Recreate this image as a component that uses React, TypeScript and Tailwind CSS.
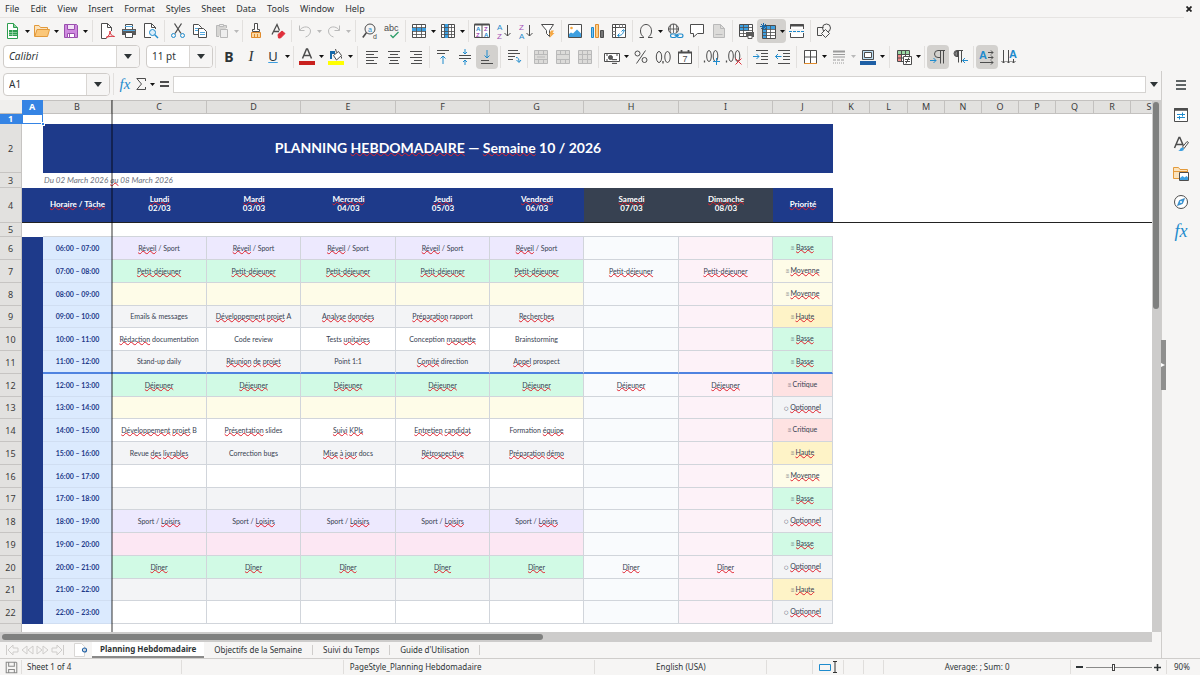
import React from "react";

type Kids = { children?: React.ReactNode };

const INK = "#4d4d4d";
const BLUE = "#1e8bcd";
const OFF = "#b9b9b9";

function Ic({ children, c = INK }: Kids & { c?: string }) {
  return (
    <svg width="16" height="16" viewBox="0 0 16 16" fill="none" stroke={c} className="shrink-0 overflow-visible" aria-hidden="true">
      {children}
    </svg>
  );
}

function Letter({ x, y, s, c, b, children }: Kids & { x: number; y: number; s: number; c: string; b?: boolean }) {
  return (
    <text x={x} y={y} fontSize={s} fill={c} stroke="none" fontWeight={b ? 700 : 400} fontFamily="Liberation Sans, sans-serif">
      {children}
    </text>
  );
}

function Lines({ rows, c = INK }: { rows: [number, number, number][]; c?: string }) {
  return (
    <g stroke={c}>
      {rows.map(([x, y, w], i) => (
        <path key={i} d={`M${x} ${y}h${w}`} />
      ))}
    </g>
  );
}

const icons: Record<string, React.ReactNode> = {
  new: (
    <Ic c="#2e9e4f">
      <path d="M2.500 .5h6l4 4v11h-10z" fill="#fff" />
      <path d="M8.500 .5v4h4" fill="#8fd3a0" />
      <path d="M4 7h8v6H4z" fill="#2e9e4f" stroke="none" />
      <path d="M4 9.500h8M4 11.500h8M7.500 7v6" stroke="#b9e5c4" strokeWidth=".6" />
    </Ic>
  ),
  open: (
    <Ic c="#e39a3b">
      <path d="M.5 13.500v-11h4.500l1.500 2h7v3" fill="#fbe3bd" />
      <path d="M3 6.500h12.500l-2 7H.8z" fill="#fbc779" />
    </Ic>
  ),
  save: (
    <Ic c="#9a4fae">
      <path d="M1.500 1.500h12l1 1v12h-13z" fill="#cf8adf" />
      <path d="M4.500 1.500h7v5h-7z" fill="#f3e2f7" />
      <path d="M4.500 14.500v-4h7v4z" fill="#fff" />
      <path d="M6.500 11v3" />
    </Ic>
  ),
  pdf: (
    <Ic>
      <path d="M12.500 8V4.500l-4-4h-6v15h5" fill="#fff" />
      <path d="M8.500 .5v4h4" />
      <path d="M7 14.500c3-1 4-4 4-6.500 0 3 2 5.500 4.500 5.500-3-.5-6 0-8.500 1z" stroke="#d9343f" />
    </Ic>
  ),
  print: (
    <Ic>
      <path d="M4.500 6V1.500h7V6" fill="#fff" />
      <path d="M1 6h14v6H1z" fill="#5a5a5a" stroke="none" />
      <path d="M2 7.500h12" stroke="#54a8de" />
      <path d="M4.500 9.500h7v5h-7z" fill="#fff" />
      <path d="M4 3.500h8" stroke="#54a8de" />
    </Ic>
  ),
  preview: (
    <Ic>
      <path d="M8 14.500H1.500V.5h7l4 4V6" fill="#fff" />
      <path d="M8.500 .5v4h4" />
      <circle cx="9.500" cy="9.500" r="3" stroke={BLUE} fill="#dceefa" />
      <path d="M11.800 11.800l3.200 3.200" stroke={BLUE} strokeWidth="1.400" />
    </Ic>
  ),
  cut: (
    <Ic>
      <path d="M4.500 .5L11 10.500M11.500 .5L5 10.500" strokeWidth="1.300" />
      <circle cx="3.500" cy="12.500" r="2" stroke={BLUE} />
      <circle cx="12.500" cy="12.500" r="2" stroke={BLUE} />
    </Ic>
  ),
  copy: (
    <Ic>
      <path d="M1.500 1.500h5l3 3v7h-8z" fill="#fff" />
      <path d="M3 5.500h4M3 7.500h4" stroke="#54a8de" />
      <path d="M6.500 5.500h5l3 3v6h-8z" fill="#fff" />
      <path d="M8 9.500h5M8 11.500h5" stroke="#54a8de" />
    </Ic>
  ),
  paste: (
    <Ic c={OFF}>
      <path d="M5 13.500H2.500v-11h10V5" fill="#d6d5d3" />
      <path d="M5.500 1.500h4v2h-4z" fill="#eee" />
      <path d="M6.500 6.500h7v8h-7z" fill="#eee" />
    </Ic>
  ),
  brush: (
    <Ic>
      <path d="M6.500 6.500v-6h3v6h2v2h-7v-2z" fill="#fff" />
      <path d="M3.500 9.500h9v5h-9z" fill="#fcd9a3" stroke="#e08b2d" />
      <path d="M6.500 11v3M9.500 11v3" stroke="#e08b2d" />
    </Ic>
  ),
  clear: (
    <Ic>
      <path d="M2 11.500L7 1.500l2.500 6M4 8.500h5" strokeWidth="1.300" />
      <path d="M8 11.500l4-3.500 3 2.500-4.500 4.500h-2z" fill="#e0303c" stroke="#e0303c" />
    </Ic>
  ),
  undo: (
    <Ic c={OFF}>
      <path d="M2.500 2.500v5h5M2.800 7C6 2.500 13.500 3 13.500 8c0 3-2 5-5 6" />
    </Ic>
  ),
  redo: (
    <Ic c={OFF}>
      <path d="M13.500 2.500v5h-5M13.200 7C10 2.500 2.500 3 2.500 8c0 3 2 5 5 6" />
    </Ic>
  ),
  find: (
    <Ic>
      <circle cx="8" cy="6" r="5" />
      <path d="M4.500 9.500L.8 14.500" strokeWidth="1.600" />
      <Letter x={6} y={8.5} s={7} c={BLUE}>a</Letter>
      <Letter x={11} y={15.5} s={7} c={INK}>d</Letter>
    </Ic>
  ),
  spell: (
    <Ic>
      <Letter x={0} y={8} s={9} c={INK}>abc</Letter>
      <path d="M6.500 12l2.500 2.500L14.500 9" stroke="#2e9e6a" strokeWidth="1.300" />
    </Ic>
  ),
  row: (
    <Ic>
      <path d="M1.500 1.500h13v13h-13z" fill="#fff" />
      <path d="M1 5h14v3H1z" fill="#3d9fe0" stroke="none" />
      <path d="M1 4.500h14M1 8.500h14M1 11.500h14M5.500 1v14M10.500 1v14" strokeWidth=".8" />
    </Ic>
  ),
  col: (
    <Ic>
      <path d="M1.500 1.500h13v13h-13z" fill="#fff" />
      <path d="M4 1h4v14H4z" fill="#3d9fe0" stroke="none" />
      <path d="M1 4.500h14M1 8.500h14M1 11.500h14M4.500 1v14M8.500 1v14M11.500 1v14" strokeWidth=".8" />
    </Ic>
  ),
  sort: (
    <Ic>
      <path d="M.5 1.500h15v13H.5z" fill="#fff" />
      <path d="M.5 1.500h15" strokeWidth="2" />
      <path d="M8 1v14" />
      <Letter x={2} y={8} s={6} c={BLUE} b>A</Letter>
      <Letter x={2} y={14} s={6} c="#a34fb5" b>Z</Letter>
      <Letter x={10} y={8} s={6} c="#a34fb5" b>Z</Letter>
      <Letter x={10} y={14} s={6} c={BLUE} b>A</Letter>
    </Ic>
  ),
  asc: (
    <Ic>
      <Letter x={1} y={7} s={8} c={BLUE}>A</Letter>
      <Letter x={1} y={16} s={8} c="#a34fb5">Z</Letter>
      <path d="M11.500 2v11M8.500 10l3 3 3-3" />
    </Ic>
  ),
  desc: (
    <Ic>
      <Letter x={1} y={7} s={8} c="#a34fb5">Z</Letter>
      <Letter x={1} y={16} s={8} c={BLUE}>A</Letter>
      <path d="M11.500 2v11M8.500 10l3 3 3-3" />
    </Ic>
  ),
  filter: (
    <Ic>
      <path d="M1.500 1.500h12l-4 6v6l-3-3v-3z" fill="#fff" />
      <path d="M11 7.500h3l-1.500 2.500h2L9.500 15l1-3.500H9z" fill="#f5a742" stroke="none" />
    </Ic>
  ),
  image: (
    <Ic>
      <path d="M1.500 1.500h13v13h-13z" fill="#fff" />
      <circle cx="4.500" cy="5" r="1.300" fill="#f5a742" stroke="none" />
      <path d="M2 14v-3l2-1.500 2 1 4-4 4 4V14z" fill="#3d9fe0" stroke="none" />
    </Ic>
  ),
  chart: (
    <Ic>
      <path d="M2.500 4.500h2v10h-2z" fill="#7cc0ee" stroke={BLUE} />
      <path d="M6.500 1.500h3v13h-3z" fill="#fbd08b" stroke="#e08b2d" />
      <path d="M11.500 7.500h3v7h-3z" fill="#777" />
    </Ic>
  ),
  pivot: (
    <Ic>
      <path d="M1.500 1.500h13v13h-13zM1 4.500h14M4.500 1v14" fill="#fff" />
      <path d="M8.500 1.500v3M11.500 1.500v3M1.500 8.500h3M1.500 11.500h3" stroke="#888" />
      <path d="M7 12.500c4 0 5.500-2 5.500-5M6.500 12.500l2-2M6.500 12.500l2 1.500M12.500 6.500l-2 2M12.500 6.500l1.500 2" stroke={BLUE} />
    </Ic>
  ),
  omega: (
    <Ic>
      <path d="M1.500 14.500H6c-2-1.500-3.500-3.500-3.500-6.500C2.500 4 5 1.500 8 1.500S13.500 4 13.500 8c0 3-1.500 5-3.500 6.500h4.500" />
    </Ic>
  ),
  link: (
    <Ic>
      <circle cx="6.500" cy="6" r="5" />
      <path d="M1.500 6h10M6.500 1v9M4 1.800c-1.200 3-1.200 6 0 8.500M9 1.800c1.200 3 1.200 6 0 8" strokeWidth=".8" />
      <path d="M4 10.500h12v5H4z" fill="#f6f5f4" stroke="none" />
      <rect x="3.500" y="11" width="6" height="3.500" rx="1.700" stroke={BLUE} strokeWidth="1.200" />
      <rect x="10" y="11" width="6" height="3.500" rx="1.700" stroke={BLUE} strokeWidth="1.200" />
      <path d="M7.500 12.700h4.500" stroke={BLUE} />
    </Ic>
  ),
  comment: (
    <Ic>
      <path d="M1.500 1.500h13v9H8.500L4.500 14v-3.500h-3z" fill="#fff" />
    </Ic>
  ),
  headfoot: (
    <Ic c={OFF}>
      <path d="M2.500 1.500h7l4 4v9h-11z" fill="#dcdbd9" />
      <path d="M9.500 1.500v4h4M4.500 11.500h7" />
    </Ic>
  ),
  printarea: (
    <Ic>
      <path d="M1.500 1.500h13v12h-13z" fill="#fff" />
      <path d="M2 2h9v6H2z" fill="#3d9fe0" stroke="none" />
      <path d="M1 4.500h14M1 7.500h14M1 10.500h14M5.500 1v13M10.500 1v7" strokeWidth=".8" />
      <path d="M8 9h8v5H8z" fill="#5a5a5a" stroke="none" />
      <path d="M10 12.500h4v3h-4z" fill="#fff" stroke="#5a5a5a" />
    </Ic>
  ),
  freeze: (
    <Ic>
      <path d="M2.500 2.500h13v13h-13z" fill="#fff" />
      <path d="M3 3h12v3H3zM3 6h4v9H3z" fill="#3d9fe0" stroke="none" />
      <path d="M2 6.500h13M2 9.500h13M2 12.500h13M6.500 2v13M10.500 2v13" strokeWidth=".8" />
      <path d="M3.500 0v7M0 3.500h7M1 1l5 5M6 1L1 6" stroke="#1769aa" />
    </Ic>
  ),
  split: (
    <Ic>
      <path d="M1.500 6V1.500h13V6M1.500 10v4.500h13V10" fill="#fff" />
      <path d="M1 2.500h14" strokeWidth="2" />
      <path d="M0 8.500h16" stroke={BLUE} strokeDasharray="3 1" />
    </Ic>
  ),
  shapes: (
    <Ic>
      <circle cx="10.500" cy="5" r="4" />
      <path d="M6 12.500H1.500v-8h6" />
      <path d="M9.500 6.500l4 4-4 4-4-4z" fill="#f6f5f4" />
    </Ic>
  ),
  left: <Ic><Lines rows={[[2, 2.5, 12], [2, 5.5, 8], [2, 8.5, 12], [2, 11.5, 8], [2, 14.5, 11]]} /></Ic>,
  center: <Ic><Lines rows={[[2, 2.5, 12], [4, 5.5, 8], [2, 8.5, 12], [4, 11.5, 8], [3, 14.5, 10]]} /></Ic>,
  right: <Ic><Lines rows={[[2, 2.5, 12], [6, 5.5, 8], [2, 8.5, 12], [6, 11.5, 8], [3, 14.5, 11]]} /></Ic>,
  top: (
    <Ic>
      <Lines rows={[[2, 1.5, 12], [2, 4.5, 8]]} />
      <path d="M8 15V7M5.500 9.500L8 7l2.500 2.500" stroke={BLUE} />
    </Ic>
  ),
  middle: (
    <Ic>
      <Lines rows={[[2, 6.5, 12], [2, 9.5, 12]]} />
      <path d="M8 0v5M6 3l2 2 2-2M8 16v-5M6 13l2-2 2 2" stroke={BLUE} />
    </Ic>
  ),
  bottom: (
    <Ic>
      <Lines rows={[[2, 11.5, 8], [2, 14.5, 12]]} />
      <path d="M8 1v8M5.500 6.500L8 9l2.500-2.500" stroke={BLUE} />
    </Ic>
  ),
  wrap: (
    <Ic>
      <Lines rows={[[2, 1.5, 10], [2, 4.5, 12], [2, 7.5, 7], [2, 10.5, 5]]} />
      <path d="M10 8.500c2.500 0 3 1.500 3 4.500M10.500 11l2.500 2.500 2-2.500" stroke={BLUE} />
    </Ic>
  ),
  merge1: (
    <Ic c={OFF}>
      <path d="M1.500 1.500h13v13h-13z" fill="#dcdbd9" />
      <path d="M1 5.500h14M1 10.500h14M5.500 1v4M10.500 1v4M5.500 11v4M10.500 11v4M4 8h8" />
    </Ic>
  ),
  merge2: (
    <Ic c={OFF}>
      <path d="M1.500 1.500h13v13h-13z" fill="#dcdbd9" />
      <path d="M1 5.500h14M1 10.500h14M5.500 1v4M10.500 1v4M5.500 11v4M10.500 11v4" />
    </Ic>
  ),
  merge3: (
    <Ic c={OFF}>
      <path d="M1.500 1.500h13v13h-13z" fill="#dcdbd9" />
      <path d="M1 5.500h14M1 10.500h14M5.500 1v14M10.500 1v14" />
    </Ic>
  ),
  currency: (
    <Ic>
      <path d="M.5 4.500h15v8H.5z" fill="#fff" />
      <path d="M2 6h2M12 6h2M2 11h2" />
      <circle cx="6.500" cy="8.500" r="2" fill="#5a5a5a" />
      <path d="M8 10h5v5H8z" fill="#5a5a5a" stroke="none" />
      <path d="M8 11.500h5M8 13.500h5" stroke="#ddd" />
    </Ic>
  ),
  percent: (
    <Ic>
      <circle cx="4.500" cy="4.500" r="2.500" />
      <circle cx="11.500" cy="11" r="2.500" />
      <path d="M12.500 1.500L3.500 14.500" />
    </Ic>
  ),
  number: (
    <Ic>
      <ellipse cx="4" cy="8" rx="2.700" ry="5.500" />
      <ellipse cx="12.500" cy="8" rx="2.700" ry="5.500" />
      <path d="M8 12v2.500" strokeWidth="1.300" />
    </Ic>
  ),
  date: (
    <Ic>
      <path d="M1.500 3.500h13v11h-13z" fill="#fff" />
      <path d="M1 3.500h14M4.500 1v3M11.500 1v3" strokeWidth="1.800" />
      <Letter x={5.5} y={13} s={9} c={INK}>7</Letter>
    </Ic>
  ),
  adddec: (
    <Ic>
      <ellipse cx="5" cy="7" rx="2.300" ry="5.500" />
      <ellipse cx="11.500" cy="7" rx="2.300" ry="5.500" />
      <path d="M.5 11.500v2" strokeWidth="1.300" />
      <path d="M12.500 9v7M9 12.500h7" stroke={BLUE} />
    </Ic>
  ),
  deldec: (
    <Ic>
      <ellipse cx="5" cy="7" rx="2.300" ry="5.500" />
      <ellipse cx="11.500" cy="7" rx="2.300" ry="5.500" />
      <path d="M.5 11.500v2" strokeWidth="1.300" />
      <path d="M9.500 9.500l6 6M15.500 9.500l-6 6" stroke="#e0303c" />
    </Ic>
  ),
  indent: (
    <Ic>
      <Lines rows={[[3, 1.5, 12], [8, 4.5, 7], [8, 7.5, 7], [8, 10.5, 7], [3, 14.5, 12]]} />
      <path d="M0 7.500h6M3.500 5L6 7.500 3.500 10" stroke={BLUE} />
    </Ic>
  ),
  outdent: (
    <Ic>
      <Lines rows={[[3, 1.5, 12], [8, 4.5, 7], [8, 7.5, 7], [8, 10.5, 7], [3, 14.5, 12]]} />
      <path d="M.5 7.500h6M3 5L.5 7.500 3 10" stroke={BLUE} />
    </Ic>
  ),
  borders: (
    <Ic>
      <path d="M2.500 1.500h12v13h-12zM8.500 1v13M2 8h12" fill="#fff" />
      <path d="M2 14.500h13" stroke="#e08b2d" />
    </Ic>
  ),
  linestyle: (
    <Ic c="#9a9a9a">
      <path d="M2 2.500h12" strokeWidth="2" />
      <path d="M2 5.500h12M2 8h12" />
      <path d="M2 11h12" strokeDasharray="3 1" />
      <path d="M2 14h12" strokeDasharray="1 1" />
    </Ic>
  ),
  linecolor: (
    <Ic>
      <path d="M2.500 1.500h11v9h-11z" fill="#bfe0f5" />
      <path d="M4.500 3.500h7v5h-7z" fill="#fff" />
      <path d="M0 12h16v4H0z" fill="#1e5fa5" stroke="none" />
    </Ic>
  ),
  cond: (
    <Ic>
      <path d="M1.500 1.500h12v11h-12z" fill="#fff" />
      <path d="M2 2h11v3H2z" fill="#9bd7a5" stroke="none" />
      <path d="M2 6h4v6H2z" fill="#f08a8a" stroke="none" />
      <path d="M1 5.500h13M1 9h6M5.500 1v12M9.500 1v6" />
      <path d="M7.500 7.500h8v8h-8z" fill="#fff" />
      <path d="M9 10.500h5M9 12.500h5M13 8.500l-3 6" />
    </Ic>
  ),
  ltr: (
    <Ic>
      <path d="M13.500 1.500v13M10.500 1.500v13M15 1.500H8a3.500 3.500 0 000 7h2.500" />
      <path d="M0 11.500h6M3.500 9L6 11.500 3.500 14" stroke={BLUE} />
    </Ic>
  ),
  rtl: (
    <Ic>
      <path d="M9.500 1.500v12M6.500 1.500v12M11 1.500H5a3 3 0 000 6h1.500" />
      <path d="M5.500 2a2.700 2.700 0 000 5.500z" fill="#888" />
      <path d="M16 11.500h-5.500M13 9l-2.500 2.500L13 14" stroke={BLUE} />
    </Ic>
  ),
  horiz: (
    <Ic>
      <Letter x={0} y={10} s={11} c={BLUE} b>A</Letter>
      <path d="M9 3.500h5M12 1.500l2 2-2 2M9 8.500h5M12 6.500l2 2-2 2M1 13.500h13M12 11.500l2 2-2 2" />
    </Ic>
  ),
  vert: (
    <Ic>
      <Letter x={8} y={9} s={11} c={BLUE} b>A</Letter>
      <path d="M2.500 1v13M.5 12l2 2 2-2M7.500 1v13M5.500 12l2 2 2-2M12.500 10v4M10.500 12l2 2 2-2" />
    </Ic>
  ),
  fontcolor: (
    <Ic>
      <path d="M3.500 9.500L7.500 0h1l4 9.500M5 6.500h6" strokeWidth="1.500" />
      <path d="M0 12h16v4H0z" fill="#c9211e" stroke="none" />
    </Ic>
  ),
  highlight: (
    <Ic>
      <path d="M5.500 6.500l5-4 3 4-5 4.500z" fill="#fff" />
      <path d="M8.500 3.500L7.500 0M13.500 7.500v2" />
      <path d="M2 2h5v3H4v5H2z" fill="#1769aa" stroke="none" />
      <path d="M0 12h16v4H0z" fill="#ffff00" stroke="none" />
    </Ic>
  ),
};

function Btn({ name, label, on }: { name: string; label: string; on?: boolean }) {
  return (
    <button
      type="button"
      aria-label={label}
      aria-pressed={on}
      className={`flex h-6 w-[22px] shrink-0 items-center justify-center rounded ${on ? "bg-[#d3d1ce]" : ""}`}
    >
      {icons[name]}
    </button>
  );
}

function Caret({ off, big }: { off?: boolean; big?: boolean }) {
  return big ? (
    <svg width="8" height="5" viewBox="0 0 8 5" aria-hidden="true">
      <path d="M0 0h8L4 5z" fill="#2e3436" />
    </svg>
  ) : (
    <svg width="5" height="3" viewBox="0 0 5 3" aria-hidden="true">
      <path d="M0 0h5L2.500 3z" fill={off ? "#b9b9b9" : "#111"} />
    </svg>
  );
}

function Arrow({ label, off }: { label: string; off?: boolean }) {
  return (
    <button type="button" aria-label={label} disabled={off} className="flex h-6 w-[7px] shrink-0 items-center justify-center">
      <Caret off={off} />
    </button>
  );
}

function Drop({ name, label, off, offArrow }: { name: string; label: string; off?: boolean; offArrow?: boolean }) {
  return (
    <div className="flex">
      <Btn name={name} label={label} />
      <Arrow label={`${label} options`} off={off || offArrow} />
    </div>
  );
}

function Sep({ wide }: { wide?: boolean }) {
  return (
    <div className={`flex h-[22px] shrink-0 justify-center ${wide ? "w-[7px]" : "w-[5px]"}`}>
      <div className="w-px bg-[#e2e0de]" />
    </div>
  );
}

function Combo({ label, value, box, italic, arrow }: { label: string; value: string; box: string; italic?: boolean; arrow: string }) {
  return (
    <div className={`relative h-[23px] shrink-0 ${box}`}>
      <select
        aria-label={label}
        className={`h-full w-full appearance-none rounded border border-[#cfccc9] bg-white pl-[5px] text-[10px] text-[#2e3436] ${italic ? "italic" : ""}`}
      >
        <option>{value}</option>
      </select>
      <span
        className={`pointer-events-none absolute inset-y-px right-px flex items-center justify-center rounded-r-[3px] border-l border-[#d9d6d3] bg-[#f6f5f4] ${arrow}`}
      >
        <Caret big />
      </span>
    </div>
  );
}

const menus = ["File", "Edit", "View", "Insert", "Format", "Styles", "Sheet", "Data", "Tools", "Window", "Help"];

function MenuBar() {
  return (
    <header className="flex h-[17px] items-center justify-between pr-1">
      <nav className="flex items-center gap-[11px] pl-[5px] text-[9px]">
        {menus.map((m) => (
          <button key={m} type="button" className="leading-4">
            {m}
          </button>
        ))}
      </nav>
      <button type="button" aria-label="Close document" className="p-1">
        <svg width="6" height="6" viewBox="0 0 6 6" stroke="#222" strokeWidth="1.800" aria-hidden="true">
          <path d="M.5 .5l5 5M5.500 .5l-5 5" />
        </svg>
      </button>
    </header>
  );
}

function StandardBar() {
  return (
    <div className="mr-4 flex h-[27px] items-center border-t border-[#e6e4e2] pl-[2px]">
      <Drop name="new" label="New" />
      <Drop name="open" label="Open" />
      <Drop name="save" label="Save" />
      <Sep wide />
      <Btn name="pdf" label="Export as PDF" />
      <Btn name="print" label="Print" />
      <Btn name="preview" label="Print preview" />
      <Sep />
      <Btn name="cut" label="Cut" />
      <Btn name="copy" label="Copy" />
      <Drop name="paste" label="Paste" off />
      <Sep />
      <Btn name="brush" label="Clone formatting" />
      <Btn name="clear" label="Clear formatting" />
      <Sep />
      <Drop name="undo" label="Undo" off />
      <Drop name="redo" label="Redo" off />
      <Sep wide />
      <Btn name="find" label="Find and replace" />
      <Btn name="spell" label="Spelling" />
      <Sep />
      <Drop name="row" label="Row" />
      <Drop name="col" label="Column" />
      <Sep />
      <Btn name="sort" label="Sort" />
      <Btn name="asc" label="Sort ascending" />
      <Btn name="desc" label="Sort descending" />
      <Btn name="filter" label="AutoFilter" />
      <Sep />
      <Btn name="image" label="Insert image" />
      <Btn name="chart" label="Insert chart" />
      <Btn name="pivot" label="Pivot table" />
      <Sep />
      <Drop name="omega" label="Special character" />
      <Btn name="link" label="Hyperlink" />
      <Btn name="comment" label="Comment" />
      <Btn name="headfoot" label="Headers and footers" />
      <Sep />
      <Btn name="printarea" label="Define print area" />
      <div className="flex rounded bg-[#d3d1ce]">
        <Btn name="freeze" label="Freeze rows and columns" />
        <Arrow label="Freeze options" />
      </div>
      <Btn name="split" label="Split window" />
      <Sep />
      <Btn name="shapes" label="Show draw functions" />
    </div>
  );
}

function FormatBar() {
  return (
    <div className="flex h-[27px] items-center pb-[2px] pl-[3px]">
      <Combo label="Font name" value="Calibri" box="w-[137px]" arrow="w-[23px]" italic />
      <div className="w-[6px] shrink-0" />
      <Combo label="Font size" value="11 pt" box="w-[67px]" arrow="w-[23px]" />
      <Sep />
      <button type="button" aria-label="Bold" className="h-6 w-[22px] shrink-0 text-[14px] font-bold">
        B
      </button>
      <button type="button" aria-label="Italic" className="h-6 w-[22px] shrink-0 font-['Liberation_Serif',serif] text-[15px] italic">
        I
      </button>
      <button type="button" aria-label="Underline" className="h-6 w-[22px] shrink-0 text-[13px] underline decoration-[#3d9fe0]">
        U
      </button>
      <Arrow label="Underline options" />
      <Sep />
      <Drop name="fontcolor" label="Font color" />
      <Drop name="highlight" label="Highlighting color" />
      <Sep wide />
      <Btn name="left" label="Align left" />
      <Btn name="center" label="Align center" />
      <Btn name="right" label="Align right" />
      <Sep />
      <Btn name="top" label="Align top" />
      <Btn name="middle" label="Center vertically" />
      <Btn name="bottom" label="Align bottom" on />
      <Sep />
      <Btn name="wrap" label="Wrap text" />
      <Sep />
      <Btn name="merge1" label="Merge and center" />
      <Btn name="merge2" label="Merge cells" />
      <Btn name="merge3" label="Unmerge cells" />
      <Sep />
      <Drop name="currency" label="Currency" />
      <Btn name="percent" label="Percent" />
      <Btn name="number" label="Number" />
      <Btn name="date" label="Date" />
      <Sep />
      <Btn name="adddec" label="Add decimal place" />
      <Btn name="deldec" label="Delete decimal place" />
      <Sep />
      <Btn name="indent" label="Increase indent" />
      <Btn name="outdent" label="Decrease indent" />
      <Sep />
      <Drop name="borders" label="Borders" />
      <Drop name="linestyle" label="Border style" offArrow />
      <Drop name="linecolor" label="Border color" />
      <Sep wide />
      <Drop name="cond" label="Conditional formatting" />
      <Sep />
      <Btn name="ltr" label="Left to right" on />
      <Btn name="rtl" label="Right to left" />
      <Sep />
      <Btn name="horiz" label="Text direction left to right" on />
      <Btn name="vert" label="Text direction top to bottom" />
    </div>
  );
}

function FormulaBar() {
  return (
    <div className="flex h-[29px] items-center pb-[3px] pl-[3px]">
      <Combo label="Name box" value="A1" box="w-[107px]" arrow="w-[23px]" />
      <Sep wide />
      <button type="button" aria-label="Function wizard" className="w-4 shrink-0 font-['Liberation_Serif',serif] text-[15px] leading-5 text-[#1e8bcd] italic">
        fx
      </button>
      <button type="button" aria-label="Sum" className="flex w-4 shrink-0 justify-center">
        <svg width="10" height="12" viewBox="0 0 10 12" fill="none" stroke={INK} aria-hidden="true">
          <path d="M9.500 3V.5H.8L5.500 6 .8 11.500h8.700V9" />
        </svg>
      </button>
      <Arrow label="Sum options" />
      <button type="button" aria-label="Formula" className="flex w-[17px] shrink-0 justify-center">
        <svg width="9" height="6" viewBox="0 0 9 6" fill={INK} aria-hidden="true">
          <path d="M0 0h9v2H0zM0 4h9v2H0z" />
        </svg>
      </button>
      <input aria-label="Input line" className="h-[17px] min-w-0 flex-1 border border-[#d5d3d1] bg-white px-1 outline-none" />
      <button type="button" aria-label="Expand formula bar" className="flex w-[15px] shrink-0 justify-center">
        <Caret big />
      </button>
    </div>
  );
}

/* Words between tildes are flagged by the spell checker. */
function Spelled({ text }: { text: string }) {
  return (
    <>
      {text.split("~").map((part, i) =>
        i % 2 ? (
          <span key={i} className="underline decoration-[#e0202c] decoration-wavy decoration-1 underline-offset-[-1px] [text-decoration-skip-ink:none]">
            {part}
          </span>
        ) : (
          part
        ),
      )}
    </>
  );
}

const fill = {
  violet: "bg-[#ede9fe]",
  green: "bg-[#d1fae5]",
  yellow: "bg-[#fefce8]",
  grey: "bg-[#f3f4f6]",
  white: "bg-white",
  pink: "bg-[#fce7f3]",
};

type Level = "Basse" | "Moyenne" | "Haute" | "Critique" | "Optionnel";

const levelFill: Record<Level, string> = {
  Basse: "bg-[#d1fae5]",
  Moyenne: "bg-[#fefce8]",
  Haute: "bg-[#fef3c7]",
  Critique: "bg-[#fee2e2]",
  Optionnel: "bg-[#f3f4f6]",
};

type Slot = { from: number; tone: keyof typeof fill; week?: string[]; all?: string; weekend?: string; level: Level };

const slots: Slot[] = [
  { from: 6, tone: "violet", all: "~Réveil~ / Sport", level: "Basse" },
  { from: 7, tone: "green", all: "~Petit-déjeuner~", weekend: "~Petit-déjeuner~", level: "Moyenne" },
  { from: 8, tone: "yellow", level: "Moyenne" },
  { from: 9, tone: "grey", week: ["Emails & messages", "~Développement~ ~projet~ A", "~Analyse~ ~données~", "~Préparation~ rapport", "~Recherches~"], level: "Haute" },
  { from: 10, tone: "white", week: ["~Rédaction~ documentation", "Code review", "Tests ~unitaires~", "Conception ~maquette~", "Brainstorming"], level: "Basse" },
  { from: 11, tone: "grey", week: ["Stand-up daily", "~Réunion~ ~de~ ~projet~", "Point 1:1", "~Comité~ direction", "~Appel~ prospect"], level: "Basse" },
  { from: 12, tone: "green", all: "~Déjeuner~", weekend: "~Déjeuner~", level: "Critique" },
  { from: 13, tone: "yellow", level: "Optionnel" },
  { from: 14, tone: "white", week: ["~Développement~ ~projet~ B", "~Présentation~ slides", "~Suivi~ ~KPIs~", "~Entretien~ ~candidat~", "Formation ~équipe~"], level: "Critique" },
  { from: 15, tone: "grey", week: ["Revue ~des~ ~livrables~", "Correction bugs", "~Mise~ ~à~ ~jour~ docs", "~Rétrospective~", "~Préparation~ ~démo~"], level: "Haute" },
  { from: 16, tone: "white", level: "Moyenne" },
  { from: 17, tone: "grey", level: "Basse" },
  { from: 18, tone: "violet", all: "Sport / ~Loisirs~", level: "Optionnel" },
  { from: 19, tone: "pink", level: "Basse" },
  { from: 20, tone: "green", all: "~Dîner~", weekend: "~Dîner~", level: "Optionnel" },
  { from: 21, tone: "grey", level: "Haute" },
  { from: 22, tone: "white", level: "Optionnel" },
];

const columns: [string, string][] = [
  ["A", "w-[21px]"],
  ["B", "w-[69px]"],
  ["C", "w-[95px]"],
  ["D", "w-[94px]"],
  ["E", "w-[95px]"],
  ["F", "w-[94px]"],
  ["G", "w-[94px]"],
  ["H", "w-[95px]"],
  ["I", "w-[94px]"],
  ["J", "w-[60px]"],
  ["K", "w-[37px]"],
  ["L", "w-[38px]"],
  ["M", "w-[37px]"],
  ["N", "w-[37px]"],
  ["O", "w-[37px]"],
  ["P", "w-[37px]"],
  ["Q", "w-[38px]"],
  ["R", "w-[37px]"],
  ["S", "w-[37px]"],
];

const days = ["Lundi", "Mardi", "Mercredi", "Jeudi", "Vendredi", "Samedi", "Dimanche"];

function RowHead({ n, on }: { n: number; on?: boolean }) {
  return (
    <th
      scope="row"
      className={`overflow-hidden border-r border-b text-center align-middle text-[9px] leading-none ${
        on ? "border-[#3584e4] bg-[#3584e4] font-bold text-white" : "border-[#c6c4c2] bg-[#e2e1df] font-normal text-[#3b3b3b]"
      }`}
    >
      {n}
    </th>
  );
}

const two = (n: number) => String(n).padStart(2, "0");

function Sheet() {
  return (
    <div className="relative min-w-0 flex-1 overflow-hidden bg-white">
      <table className="w-[1168px] table-fixed border-separate border-spacing-0 font-['Lato',sans-serif]">
        <colgroup>
          <col className="w-[22px]" />
          {columns.map(([c, w]) => (
            <col key={c} className={w} />
          ))}
        </colgroup>
        <thead className="font-['Noto_Sans',sans-serif]">
          <tr className="h-[14px]">
            <td className="border-b border-[#bdbbb9] bg-[#f0efed]" />
            {columns.map(([c]) => (
              <th
                key={c}
                scope="col"
                className={`border-y border-r text-center text-[9px] leading-3 ${
                  c === "A" ? "border-[#3584e4] bg-[#3584e4] font-bold text-white" : "border-[#c3c1bf] bg-[#e2e1df] font-normal text-[#3b3b3b]"
                }`}
              >
                {c}
              </th>
            ))}
          </tr>
        </thead>
        <tbody className="[&_th]:font-['Noto_Sans',sans-serif]">
          <tr className="h-[10px]">
            <RowHead n={1} on />
            <td className="relative">
              <div className="absolute inset-0 border border-[#3584e4]" />
              <div className="absolute -right-[2px] -bottom-[2px] z-10 size-1 border border-white bg-[#3584e4]" />
            </td>
            <td colSpan={18} />
          </tr>
          <tr className="h-[49px]">
            <RowHead n={2} />
            <td />
            <td colSpan={9} className="bg-[#1e3a8a] pb-[3px] text-center text-[14px] font-bold text-white">
              PLANNING <Spelled text="~HEBDOMADAIRE~" /> — <Spelled text="~Semaine~" /> 10 / 2026
            </td>
            <td colSpan={9} />
          </tr>
          <tr className="h-[15px]">
            <RowHead n={3} />
            <td />
            <td colSpan={9} className="pb-[2px] pl-px text-[8px] leading-3 text-[#6b7280] italic">
              <Spelled text="Du 02 March 2026 ~au~ 08 March 2026" />
            </td>
            <td colSpan={9} />
          </tr>
          <tr className="h-[35px] text-center text-[8px] leading-[9px] font-bold text-white [&_td]:border-b [&_td]:border-[#222] [&_td]:pb-[2px]">
            <RowHead n={4} />
            <td className="bg-[#1e3a8a]" />
            <td className="bg-[#1e3a8a]">
              <Spelled text="~Horaire~ / ~Tâche~" />
            </td>
            {days.map((d, i) => (
              <td key={d} className={i > 4 ? "bg-[#374151]" : "bg-[#1e3a8a]"}>
                <Spelled text={`~${d}~`} />
                <br />
                {two(i + 2)}/03
              </td>
            ))}
            <td className="bg-[#1e3a8a]">
              <Spelled text="~Priorité~" />
            </td>
            <td colSpan={9} />
          </tr>
          <tr className="h-[14px]">
            <RowHead n={5} />
            <td />
            <td colSpan={9} className="border-b border-[#d1d5db]" />
            <td colSpan={9} />
          </tr>
          {slots.map((s, i) => {
            const noon = s.from === 11;
            const edge = noon ? "border-r border-b-2 border-r-[#d1d5db] border-b-[#4f83e0]" : "border-r border-b border-[#d1d5db]";
            return (
              <tr key={s.from} className={`text-center text-[7px] leading-[9px] text-[#374151] ${i % 4 === 3 ? "h-[22px]" : "h-[23px]"}`}>
                <RowHead n={i + 6} />
                <td className="bg-[#1e3a8a]" />
                <td className={`bg-[#dbeafe] font-bold text-[#1e3a8a] ${noon ? "border-b-2 border-[#4f83e0]" : "border-b border-[#d0def2]"}`}>
                  {two(s.from)}:00 – {two(s.from + 1)}:00
                </td>
                {[0, 1, 2, 3, 4].map((d) => (
                  <td key={d} className={`${edge} ${fill[s.tone]}`}>
                    <Spelled text={s.week ? s.week[d] : s.all || ""} />
                  </td>
                ))}
                <td className={`${edge} bg-[#f9fbfd]`}>
                  <Spelled text={s.weekend || ""} />
                </td>
                <td className={`${edge} bg-[#fdf2f8]`}>
                  <Spelled text={s.weekend || ""} />
                </td>
                <td className={`${edge} ${levelFill[s.level]}`}>
                  <span className="font-['DejaVu_Sans',sans-serif] text-[5px]">{s.level === "Optionnel" ? "○" : "⍰"}</span>{" "}
                  <Spelled text={s.level === "Critique" ? s.level : `~${s.level}~`} />
                </td>
                <td colSpan={9} />
              </tr>
            );
          })}
          <tr className="h-6">
            <td className="border-r border-[#bdbbb9] bg-[#e2e1df]" />
            <td colSpan={19} />
          </tr>
        </tbody>
      </table>
      <div className="absolute inset-y-0 left-[111px] w-[2px] bg-black/40" />
    </div>
  );
}

const side: [string, React.ReactNode][] = [
  [
    "Properties",
    <Ic key="p">
      <path d="M1.500 1.500h13v13h-13z" fill="#fff" />
      <path d="M1 2.500h14" strokeWidth="2.500" />
      <path d="M4 7.500h8M4 10.500h8M9.500 5.500v4M6.500 9v3.500" stroke={BLUE} />
    </Ic>,
  ],
  [
    "Styles",
    <Ic key="s">
      <path d="M1.500 12L6 1.500h.8L10.500 10M3 8.500h6.500" strokeWidth="1.500" />
      <path d="M9.500 11l4.500-5.500 1.500 1-4.500 6z" fill="#fff" />
      <path d="M5 15c2 0 2-3.500 4.500-3.500 2 0 2 3.500-1 3.500z" fill="#3d9fe0" stroke="none" />
    </Ic>,
  ],
  [
    "Gallery",
    <Ic key="g">
      <path d="M.5 13.500v-11h5l1.500 2h7.500v9z" fill="#fbe3bd" stroke="#e39a3b" />
      <path d="M.5 6.500h14" stroke="#e39a3b" />
      <path d="M6.500 7.500h9v8h-9z" fill="#fff" />
      <path d="M7 15v-2l2.500-2 2 1.500 2-1.500 1.500 1.500V15z" fill="#3d9fe0" stroke="none" />
    </Ic>,
  ],
  [
    "Navigator",
    <Ic key="n">
      <circle cx="8" cy="8" r="6.500" fill="#fff" />
      <path d="M11.500 4.500L9.500 9.500l-5 2 2-5z" fill="#3d9fe0" stroke="#1769aa" strokeWidth=".6" />
      <circle cx="8" cy="8" r="1" fill="#fff" stroke="none" />
    </Ic>,
  ],
];

function Sidebar() {
  return (
    <aside className="relative flex w-[39px] shrink-0 flex-col items-center gap-[13px] border-l border-[#cfcdcb] pt-[6px]">
      <button type="button" aria-label="Sidebar settings">
        <Ic>
          <path d="M3 4h10M3 8h10M3 12h10" stroke="#2e3436" strokeWidth="1.500" />
        </Ic>
      </button>
      {side.map(([label, icon], i) => (
        <button key={label} type="button" aria-label={label} className={i === 0 ? "mt-px" : ""}>
          {icon}
        </button>
      ))}
      <button type="button" aria-label="Functions" className="font-['Liberation_Serif',serif] text-[18px] leading-4 text-[#1e8bcd] italic">
        fx
      </button>
      <button
        type="button"
        aria-label="Hide sidebar"
        className="absolute top-1/2 -left-px flex h-[50px] w-[5px] -translate-y-1/2 items-center bg-[#8f8f8e]"
      >
        <svg width="4" height="4" viewBox="0 0 4 4" fill="#fff" aria-hidden="true">
          <path d="M0 0l4 2-4 2z" />
        </svg>
      </button>
    </aside>
  );
}

const navShapes: [string, string][] = [
  ["First sheet", "M.5 1v10M2 6l5-5v3h5v4H7v3z"],
  ["Previous sheet", "M1 6l5-4v8zM7 6l5-4v8z"],
  ["Next sheet", "M12 6L7 2v8zM6 6L1 2v8z"],
  ["Last sheet", "M12.500 1v10M11 6L6 1v3H1v4h5v3z"],
];

function Tabs() {
  return (
    <div className="flex h-4 items-center">
      <div className="flex w-[74px] gap-[2px] pl-[6px]">
        {navShapes.map(([label, d]) => (
          <button key={label} type="button" aria-label={label} disabled>
            <svg width="13" height="12" viewBox="0 0 13 12" fill="none" stroke="#cfcdcb" aria-hidden="true">
              <path d={d} />
            </svg>
          </button>
        ))}
      </div>
      <button type="button" aria-label="Add sheet" className="w-[18px]">
        <svg width="16" height="14" viewBox="0 0 16 14" fill="none" aria-hidden="true">
          <path d="M.5 .5h7l3 3v10H.5z" fill="#fff" stroke="#d9d7d5" />
          <circle cx="10.500" cy="7" r="2" stroke="#1e5fa5" strokeWidth="1.200" />
        </svg>
      </button>
      <div role="tablist" className="flex h-4 items-center text-[8px]">
        <button type="button" role="tab" aria-selected="true" className="h-4 border-b-2 border-[#8a8a89] bg-white px-2 leading-[14px] font-bold">
          Planning Hebdomadaire
        </button>
        {["Objectifs de la Semaine", "Suivi du Temps", "Guide d'Utilisation"].map((t) => (
          <button key={t} type="button" role="tab" aria-selected="false" className="h-[10px] border-r border-[#cfcdcb] px-[10px] leading-[10px]">
            {t}
          </button>
        ))}
      </div>
    </div>
  );
}

function StatusBar() {
  return (
    <footer className="grid h-[17px] shrink-0 grid-cols-[22px_160fr_162fr_252fr_172fr_46fr_31px_20px_20px_187fr_96px_33px] items-center border-t border-[#cfcdcb] text-[8px] leading-[14px] [&>*]:h-[14px] [&>*]:border-r [&>*]:border-[#e0dedc] [&>*:last-child]:border-r-0">
      <div className="flex items-center pl-[5px]">
        <svg width="13" height="13" viewBox="0 0 16 16" fill="none" stroke="#8a8a89" strokeWidth="1.300" aria-label="Document saved">
          <path d="M1.500 1.500h12l1 1v12h-13zM4.500 1.500v5h7v-5M4.500 14.500v-4h7v4" />
        </svg>
      </div>
      <div className="pl-[5px] whitespace-nowrap">Sheet 1 of 4</div>
      <div />
      <div className="truncate pl-[6px]">PageStyle_Planning Hebdomadaire</div>
      <div className="text-center whitespace-nowrap">English (USA)</div>
      <div />
      <div className="flex items-center justify-center">
        <svg width="20" height="12" viewBox="0 0 20 12" fill="none" aria-label="Selection mode">
          <path d="M1.500 3.500h11v6h-11z" stroke={BLUE} />
          <path d="M15 .5h4M15 11.500h4M17 1v10" stroke="#333" />
        </svg>
      </div>
      <div />
      <div />
      <div className="text-center whitespace-nowrap">Average: ; Sum: 0</div>
      <div className="flex items-center justify-between px-[5px]">
        <button type="button" aria-label="Zoom out" className="h-[2px] w-[7px] bg-[#2e3436]" />
        <input
          type="range"
          aria-label="Zoom"
          min={0}
          max={100}
          defaultValue={42}
          className="h-[9px] w-[66px] appearance-none bg-transparent [&::-webkit-slider-runnable-track]:h-px [&::-webkit-slider-runnable-track]:bg-[#8a8a89] [&::-webkit-slider-thumb]:-mt-[3px] [&::-webkit-slider-thumb]:h-[7px] [&::-webkit-slider-thumb]:w-[3px] [&::-webkit-slider-thumb]:appearance-none [&::-webkit-slider-thumb]:border [&::-webkit-slider-thumb]:border-[#444] [&::-webkit-slider-thumb]:bg-white"
        />
        <button type="button" aria-label="Zoom in">
          <svg width="7" height="7" viewBox="0 0 7 7" stroke="#2e3436" strokeWidth="1.600" aria-hidden="true">
            <path d="M0 3.500h7M3.500 0v7" />
          </svg>
        </button>
      </div>
      <div className="pl-[7px]">90%</div>
    </footer>
  );
}

export default function App() {
  return (
    <div className="flex h-screen flex-col overflow-hidden bg-[#f6f5f4] font-['Noto_Sans',sans-serif] text-[9px] text-[#2e3436]">
      <MenuBar />
      <StandardBar />
      <FormatBar />
      <div className="flex min-h-0 flex-1">
        <main className="flex min-w-0 flex-1 flex-col">
          <FormulaBar />
          <div className="flex min-h-0 flex-1">
            <Sheet />
            <div className="w-[9px] bg-[#cdcccb] px-px pt-[2px]">
              <div className="h-[39%] w-[6px] rounded-full bg-[#7f807f]" />
            </div>
          </div>
          <div className="mr-[9px] h-[10px] bg-[#cdcccb] py-[2px] pl-[2px]">
            <div className="h-[6px] w-[47%] rounded-full bg-[#7f807f]" />
          </div>
          <Tabs />
        </main>
        <Sidebar />
      </div>
      <StatusBar />
    </div>
  );
}
